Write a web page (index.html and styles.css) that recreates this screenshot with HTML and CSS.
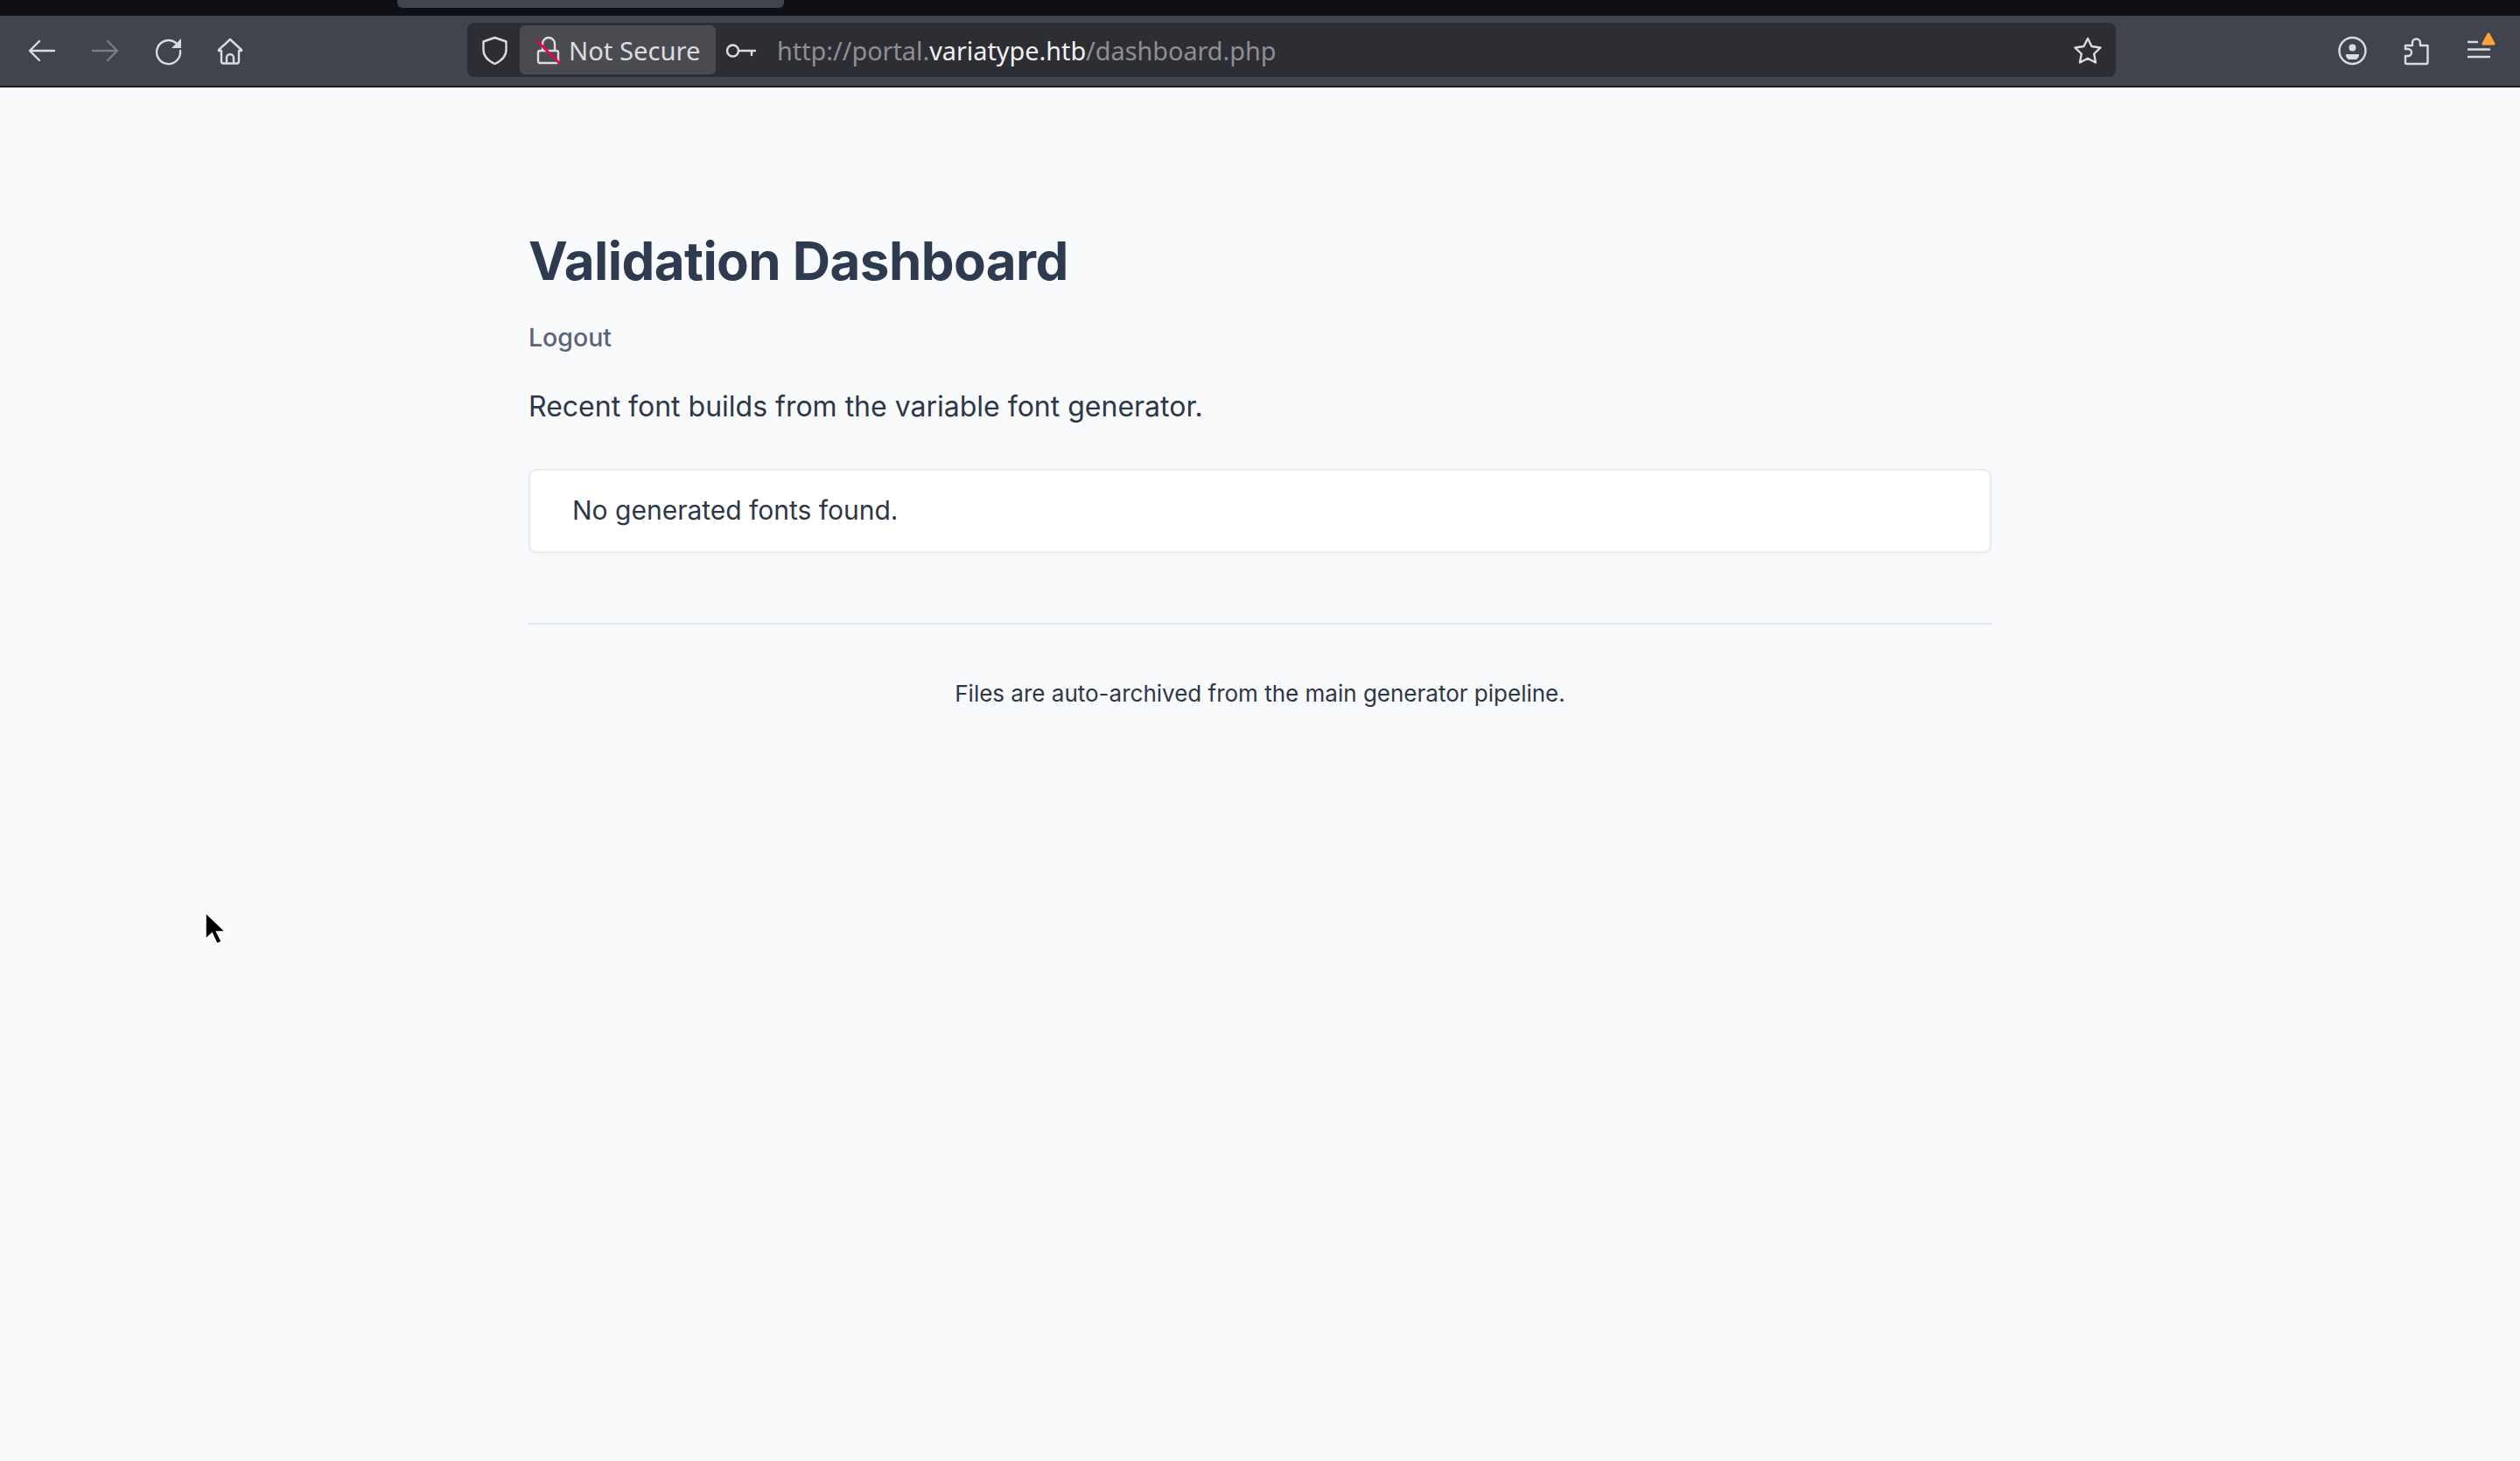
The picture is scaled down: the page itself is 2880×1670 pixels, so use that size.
FILE: index.html
```html
<!DOCTYPE html>
<html lang="en">
<head>
<meta charset="utf-8">
<title>Validation Dashboard</title>
<link rel="stylesheet" href="styles.css">
</head>
<body>
<div class="tabstrip"><div class="tab"></div></div>
<header class="toolbar">
  <div class="nav">
    <svg class="icon" viewBox="0 0 32 32"><path d="M30 17H3M13 6 2 17l11 11"/></svg>
    <svg class="icon dim" viewBox="0 0 32 32"><path d="M2 17h27M19 6l11 11-11 11"/></svg>
    <svg class="icon" viewBox="0 0 32 32"><path d="M25 8A13.500 13.500 0 1 0 30 17"/><path class="fill" d="M31 3v11H20z"/></svg>
    <svg class="icon" viewBox="0 0 32 32"><path d="M15 4 2 16v1h3v12a2.500 2.500 0 0 0 2.500 2.500h15A2.500 2.500 0 0 0 25 29V17h3v-1zM11 31v-6a4 4 0 0 1 8 0v6"/></svg>
  </div>
  <div class="urlbar">
    <svg class="icon shield" viewBox="0 0 32 32"><path d="M15.500 2 2.500 6.500V16c0 7 5.500 12.500 13 16 7.500-3.500 13-9 13-16V6.500z"/></svg>
    <div class="identity">
      <svg class="lock" viewBox="0 0 30 32"><path d="M5 17h19a2 2 0 0 1 2 2v10a2 2 0 0 1-2 2H5a2 2 0 0 1-2-2V19a2 2 0 0 1 2-2zM8 17V9a7 7 0 0 1 14 0v8"/><path class="slash" d="M1 5l27 27"/></svg>
      <span class="identity-label">Not Secure</span>
    </div>
    <svg class="icon key" viewBox="0 0 36 32"><circle cx="9.500" cy="17" r="6.500"/><path d="M16 17h19M31 17v5"/></svg>
    <div class="url"><span class="muted">http://portal.</span>variatype.htb<span class="muted">/dashboard.php</span></div>
    <svg class="icon star" viewBox="0 0 32 32"><path d="m16 3 4.500 9 10 1.500-7.300 7 1.800 10-9-4.800-9 4.800 1.800-10-7.300-7 10-1.500z"/></svg>
  </div>
  <div class="tools">
    <svg class="icon" viewBox="0 0 32 32"><circle cx="16.500" cy="17" r="15"/><circle class="fill" cx="16.500" cy="13.500" r="4"/><path class="fill" d="M9 21h15a7 7 0 0 1-3 6H12a7 7 0 0 1-3-6z"/></svg>
    <svg class="icon" viewBox="0 0 32 32"><path d="M4 11h8V8a4.500 4.500 0 0 1 9 0v3h8.500v19.500a1.500 1.500 0 0 1-1.500 1.500H5.500A1.500 1.500 0 0 1 4 30.500V23h3a4 4 0 0 0 0-8H4z"/></svg>
    <div class="menu">
      <svg class="icon" viewBox="0 0 32 32"><path d="M3 7h10M3 15.500h24M3 24h24"/></svg>
      <svg class="alert" viewBox="0 0 16 15"><path d="M8 2 2 13h12z"/></svg>
    </div>
  </div>
</header>
<main class="page">
  <h1 class="title">Validation Dashboard</h1>
  <a class="logout" href="#">Logout</a>
  <p class="lead">Recent font builds from the variable font generator.</p>
  <div class="card">No generated fonts found.</div>
  <hr class="rule">
  <p class="note">Files are auto-archived from the main generator pipeline.</p>
</main>
<svg class="cursor" viewBox="0 0 30 44"><path d="M3 2v33l8-7 6 13 6-3-6-12h11z"/></svg>
</body>
</html>
```
FILE: styles.css
```css
* { box-sizing: border-box; }
html, body { margin: 0; height: 100%; }
body {
  position: relative;
  background: #f9fafc;
  font-family: Inter, "Liberation Sans", sans-serif;
  color: #2d3748;
  overflow: hidden;
}
.tabstrip { height: 18px; background: #0f1016; padding-left: 454px; }
.tab { width: 442px; height: 9px; background: #42444d; border-radius: 0 0 6px 6px; }
.toolbar {
  height: 82px;
  background: #42444d;
  border-bottom: 2px solid #1c1c22;
  display: flex;
  align-items: center;
  padding-bottom: 2px;
}
.icon {
  width: 32px;
  height: 32px;
  flex: none;
  fill: none;
  overflow: visible;
  stroke: #dcdcde;
  stroke-width: 2.400;
  stroke-linecap: round;
  stroke-linejoin: round;
}
.icon .fill { fill: #dcdcde; stroke: none; }
.icon.dim { stroke: #7c7d83; }
.nav { width: 534px; display: flex; gap: 40px; padding-left: 32px; }
.urlbar {
  width: 1884px;
  height: 62px;
  background: #2d2e33;
  border-radius: 8px;
  display: flex;
  align-items: center;
  color: #fbfbfe;
  font-family: "Noto Sans", "Open Sans", sans-serif;
  font-size: 28.800px;
}
.shield { margin-left: 16px; margin-right: 12px; }
.identity {
  width: 224px;
  height: 56px;
  background: #4a4b51;
  border-radius: 6px;
  display: flex;
  align-items: center;
  gap: 8px;
  padding-left: 18px;
  color: #dcdcde;
  font-size: 29.200px;
}
.identity-label { padding-top: 2px; }
.lock {
  width: 30px;
  height: 32px;
  flex: none;
  fill: none;
  overflow: visible;
  stroke: #dcdcde;
  stroke-width: 2.400;
}
.lock .slash { stroke: #d70a53; stroke-width: 3; }
.key { width: 36px; margin-left: 10px; }
.url { margin-left: 24px; padding-top: 1px; flex: 1; color: #f2f2f4; }
.muted { color: #8e8f94; }
.star { margin-right: 16px; }
.tools { flex: 1; display: flex; gap: 41px; padding-left: 254px; }
.menu { position: relative; width: 32px; height: 32px; }
.alert {
  position: absolute;
  right: -2px;
  top: -4px;
  width: 16px;
  height: 15px;
  fill: #ffa436;
  stroke: #ffa436;
  stroke-width: 3;
  stroke-linejoin: round;
}
.page { width: 1672px; margin: 0 auto; padding-top: 162px; }
.title { margin: 0; font-size: 60px; line-height: 72px; font-weight: 700; letter-spacing: -0.55px; color: #2d3a50; }
.logout {
  display: block;
  margin-top: 32px;
  font-size: 28.500px;
  line-height: 40px;
  font-weight: 500;
  color: #5a6578;
  text-decoration: none;
}
.lead { margin: 39px 0 0; font-size: 32px; line-height: 40px; color: #2d3748; }
.card {
  margin-top: 51px;
  height: 96px;
  padding: 0 0 2px 48px;
  display: flex;
  align-items: center;
  background: #fff;
  border: 2px solid #e8edf3;
  border-radius: 8px;
  box-shadow: 0 2px 4px rgba(0,0,0,.03);
  font-size: 30px;
}
.rule { margin: 80px 0 0; border: 0; border-top: 2px solid #e2e8f0; }
.note { margin: 61px 0 0; text-align: center; font-size: 26px; line-height: 36px; }
.cursor { position: absolute; left: 232px; top: 1041px; width: 28px; height: 41px; fill: #000; stroke: #fff; stroke-width: 2; }
```
